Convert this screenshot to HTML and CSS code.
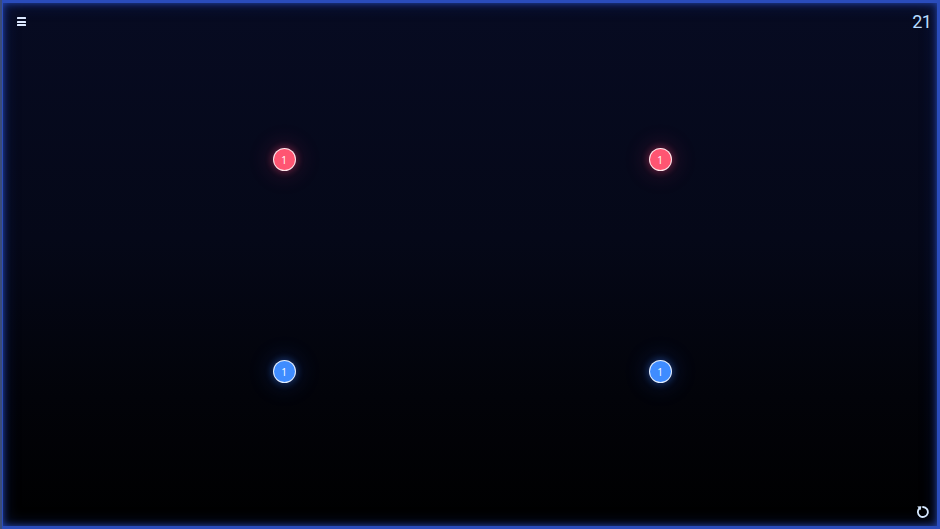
FILE: index.html
```html
<!DOCTYPE html>
<html>
<head>
<meta charset="utf-8">
<link rel="stylesheet" href="styles.css">
</head>
<body>
<div class="screen">
  <div class="topbar">
    <div class="menu" aria-label="menu"><span></span><span></span><span></span></div>
    <div class="score">21</div>
  </div>
  <div class="board">
    <div class="dot red">1</div>
    <div class="dot red">1</div>
    <div class="dot blue">1</div>
    <div class="dot blue">1</div>
  </div>
  <div class="bottombar">
    <svg class="reset" width="14" height="14" viewBox="0 0 14 14">
      <path d="M3.6 3.2 A5 5 0 1 0 7 2" fill="none" stroke="#d6e8ff" stroke-width="1.8" stroke-linecap="round"/>
      <path d="M1.2 1.4 L5.4 1.2 L4.6 5.2 Z" fill="#d6e8ff"/>
    </svg>
  </div>
</div>
</body>
</html>
```
FILE: styles.css
```css
html, body {
  margin: 0;
  padding: 0;
  width: 940px;
  height: 529px;
  overflow: hidden;
  background: #000;
}
.screen {
  width: 940px;
  height: 529px;
  box-sizing: border-box;
  display: flex;
  flex-direction: column;
  background: linear-gradient(180deg, #070b22 0%, #050818 45%, #020309 75%, #000000 100%);
  box-shadow:
    inset 2px 0 0 #3b4c78,
    inset 0 0 0 3px #2a4cbc,
    inset 0 0 7px 3px rgba(40, 76, 190, 0.85),
    inset 0 0 16px 4px rgba(30, 60, 170, 0.35);
  font-family: "Roboto", "Liberation Sans", sans-serif;
}
.topbar {
  display: flex;
  justify-content: space-between;
  align-items: flex-start;
  padding: 16px 9px 0 17px;
  height: 30px;
  box-sizing: border-box;
}
.menu {
  display: flex;
  flex-direction: column;
  gap: 1.5px;
  padding-top: 1px;
}
.menu span {
  display: block;
  width: 9px;
  height: 2px;
  background: #dce8ff;
  border-radius: 0.5px;
}
.score {
  color: #b8dcff;
  font-size: 18px;
  font-weight: 400;
  line-height: 14px;
  letter-spacing: -0.8px;
  margin-top: -1px;
}
.board {
  flex: 1;
  display: grid;
  grid-template-columns: 23px 23px;
  grid-template-rows: 23px 23px;
  column-gap: 353px;
  row-gap: 189px;
  align-content: start;
  justify-content: center;
  padding: 118px 0 0 4px;
}
.dot {
  width: 23px;
  height: 23px;
  box-sizing: border-box;
  border-radius: 50%;
  border: 1.5px solid rgba(255, 255, 255, 0.85);
  color: #fff;
  font-size: 10px;
  font-family: "Open Sans", "Liberation Sans", sans-serif;
  display: flex;
  align-items: center;
  justify-content: center;
  line-height: 1;
}
.red {
  background: #ff5572;
  box-shadow: 0 0 6px 2px rgba(255, 70, 110, 0.28), 0 0 20px 8px rgba(255, 60, 110, 0.1);
}
.blue {
  background: #3f8cff;
  box-shadow: 0 0 6px 2px rgba(60, 130, 255, 0.28), 0 0 20px 8px rgba(50, 110, 255, 0.1);
}
.bottombar {
  display: flex;
  justify-content: flex-end;
  padding: 0 10px 10px 0;
}
.reset {
  display: block;
}
```
